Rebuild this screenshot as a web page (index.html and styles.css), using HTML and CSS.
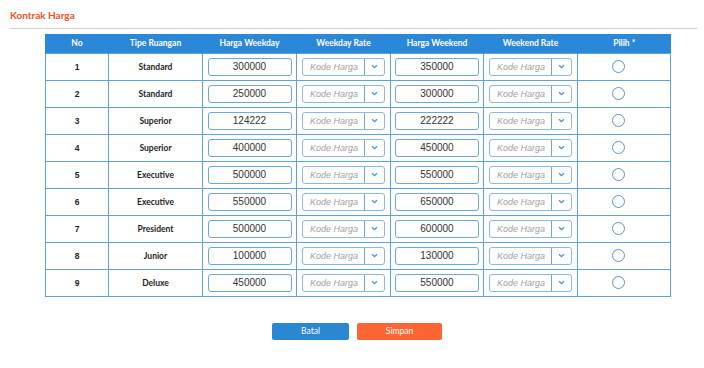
FILE: index.html
```html
<!DOCTYPE html>
<html>
<head>
<meta charset="utf-8">
<link rel="stylesheet" href="styles.css">
</head>
<body>
<div class="page">
  <h1 class="title">Kontrak Harga</h1>
  <div class="rule"></div>
  <table class="grid">
    <colgroup>
      <col class="c-no"><col class="c-w"><col class="c-w"><col class="c-w"><col class="c-n"><col class="c-w"><col class="c-n">
    </colgroup>
    <thead>
      <tr><th>No</th><th>Tipe Ruangan</th><th>Harga Weekday</th><th>Weekday Rate</th><th>Harga Weekend</th><th>Weekend Rate</th><th>Pilih *</th></tr>
    </thead>
    <tbody id="rows"></tbody>
  </table>
  <div class="actions">
    <button class="btn btn-blue">Batal</button>
    <button class="btn btn-orange">Simpan</button>
  </div>
</div>
<script>
const data = [
  [1,"Standard","300000","350000"],
  [2,"Standard","250000","300000"],
  [3,"Superior","124222","222222"],
  [4,"Superior","400000","450000"],
  [5,"Executive","500000","550000"],
  [6,"Executive","550000","650000"],
  [7,"President","500000","600000"],
  [8,"Junior","100000","130000"],
  [9,"Deluxe","450000","550000"]
];
const sel = '<div class="sel"><span class="ph">Kode Harga</span><span class="caret"><svg width="7" height="5" viewBox="0 0 7 5"><path d="M1 1.2 L3.5 3.6 L6 1.2" fill="none" stroke="#4a90d9" stroke-width="1.3"/></svg></span></div>';
document.getElementById('rows').innerHTML = data.map(r =>
  `<tr><td class="no">${r[0]}</td><td class="type">${r[1]}</td><td><div class="inp">${r[2]}</div></td><td>${sel}</td><td><div class="inp">${r[3]}</div></td><td>${sel}</td><td><span class="radio"></span></td></tr>`
).join('');
</script>
</body>
</html>
```
FILE: styles.css
```css
* { box-sizing: border-box; }
html, body { margin: 0; padding: 0; background: #fff; }
body { font-family: Lato, "Liberation Sans", sans-serif; }
.page { width: 704px; height: 368px; padding: 9px 7px 0 10px; }
.title { margin: 0; font-size: 10px; font-weight: 700; color: #f4511e; line-height: 13px; height: 13px; }
.rule { height: 1px; background: #cfcfcf; margin: 6px 0 0 0; width: 687px; }
.grid { border-collapse: collapse; margin: 5px 0 0 35px; width: 625px; table-layout: fixed; }
.c-no { width: 63px; }
.c-w { width: 94px; }
.c-n { width: 93px; }
.grid th { background: #2b88d8; color: #fff; font-size: 8.5px; font-weight: 700; height: 19px; padding: 0; border: none; border-left: 1px solid #2b88d8; }
.grid td { border: 1px solid #5ea2dd; height: 27px; padding: 0; text-align: center; vertical-align: middle; font-size: 8.5px; color: #222; }
.grid td.no { font-family: "Liberation Sans", sans-serif; font-weight: 700; font-size: 8.5px; padding-top: 1px; }
.grid td.type { font-weight: 700; color: #1d1d1d; padding-top: 1px; }
.inp { margin: 0 auto; width: 84px; height: 18px; border: 1px solid #6fa7db; border-radius: 3px; font-family: "Liberation Sans", sans-serif; font-size: 10px; line-height: 16px; color: #333; text-align: center; }
.sel { margin: 0 auto; width: 83px; height: 18px; border: 1px solid #8db8e2; border-radius: 3px; display: flex; align-items: stretch; }
.ph { flex: 1; text-align: left; padding-left: 7px; font-family: "Liberation Sans", sans-serif; font-style: italic; font-size: 9px; line-height: 16px; color: #a0a0a0; border-right: 1px solid #6fa7db; }
.caret { width: 19px; display: flex; align-items: center; justify-content: center; }
.radio { display: inline-block; width: 13px; height: 13px; border: 1px solid #5b95cf; border-radius: 50%; vertical-align: middle; margin-right: 12px; }
.actions { display: flex; gap: 8px; margin: 26px 0 0 262px; }
.btn { border: none; border-radius: 2px; height: 17px; font-family: Lato, sans-serif; font-size: 8.5px; color: #fff; padding: 0; }
.btn-blue { background: #2a87d2; width: 77px; }
.btn-orange { background: #ff6533; width: 85px; }
```
